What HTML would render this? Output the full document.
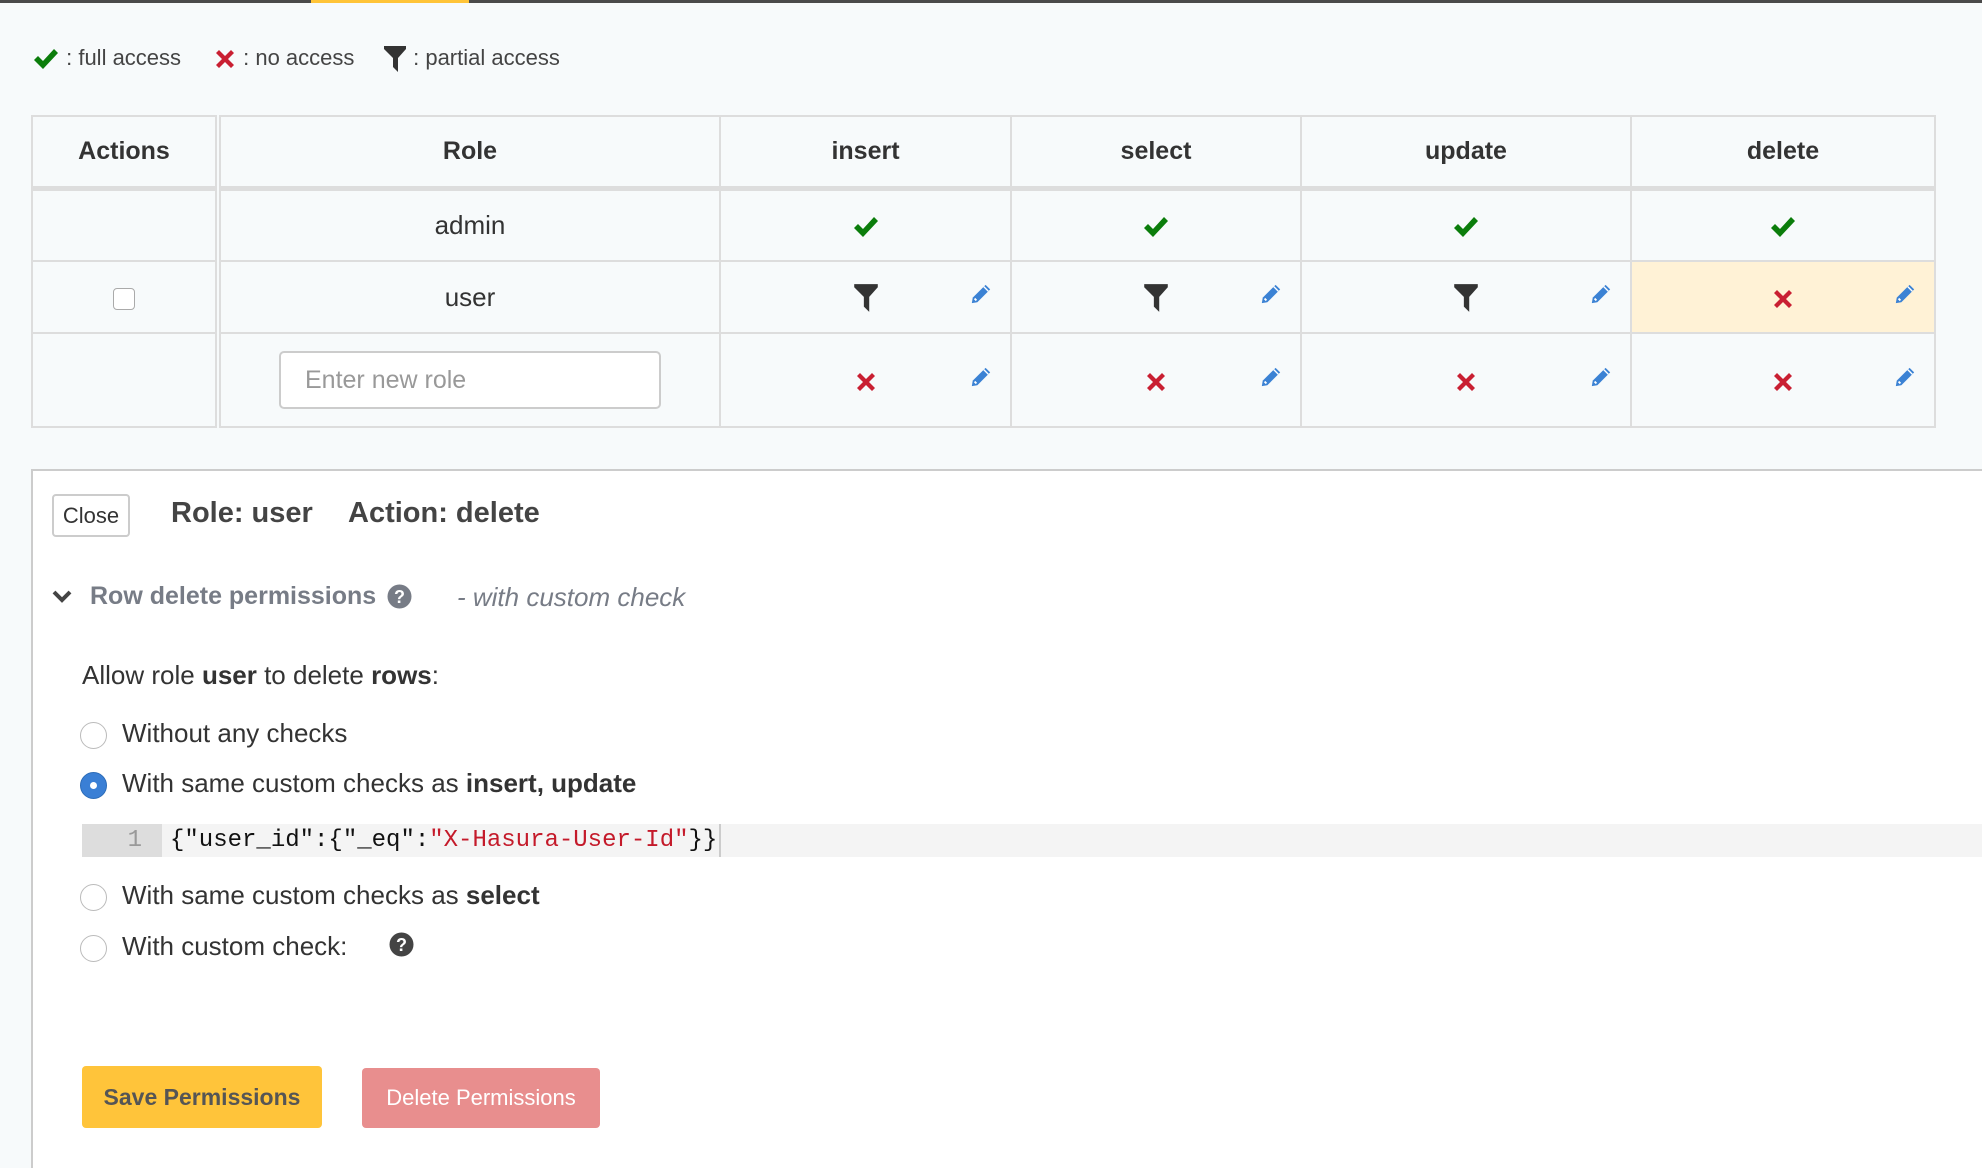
<!DOCTYPE html>
<html><head><meta charset="utf-8"><style>
*{box-sizing:border-box;margin:0;padding:0}
html,body{width:1982px;height:1168px;overflow:hidden}
body{background:#f7fafb;font-family:"Liberation Sans",sans-serif;color:#333;position:relative}
.a{position:absolute}
.bar{left:0;top:0;width:1982px;height:3px;background:#4a4a4a}
.bar i{position:absolute;left:311px;width:158px;height:3px;background:#ffc438}
.leg{top:44px;font-size:22px;color:#444;height:28px;line-height:28px}
table{position:absolute;left:31px;top:115px;border-collapse:collapse;font-size:26px}
td,th{border:2px solid #ddd;text-align:center;position:relative}
th{height:72px;font-weight:bold;font-size:25px;color:#333;border-bottom:5px solid #ddd}
.p{position:absolute;right:18px;top:50%;margin-top:-14px}
.c{display:inline-block;vertical-align:middle}
.panel{left:31px;top:469px;width:1951px;height:699px;background:#fff;border:2px solid #ccc;border-right:none;border-bottom:none}
.rad{width:27px;height:27px;border-radius:50%;border:1px solid #bbb;background:#fff;left:80px}
.lbl{left:122px;font-size:26px;color:#333;height:32px;line-height:32px}
</style></head><body>
<svg width="0" height="0" style="position:absolute">
<defs>
<symbol id="chk" viewBox="0 0 28 24"><path d="M2 13 L6 9 L11 14 L22 2 L26 6 L11 22 Z" fill="#0b7d0b"/></symbol>
<symbol id="x" viewBox="0 0 24 24"><path d="M3 6 L6 3 L12 9 L18 3 L21 6 L15 12 L21 18 L18 21 L12 15 L6 21 L3 18 L9 12 Z" fill="#c91f32"/></symbol>
<symbol id="fun" viewBox="0 0 24 28"><path d="M1 1 H23 V4 L15 13 V27 L10 22 V13 L1 4 Z" fill="#333"/></symbol>
<symbol id="pen" viewBox="0 0 24 24"><path d="M17 2 L22 7 L8 21 L2 22 L3 16 Z" fill="#3b82d4"/><path d="M15 4 L20 9" stroke="#fff" stroke-width="1.5"/><path d="M5 17 L7 19" stroke="#fff" stroke-width="2"/></symbol>
</defs></svg>
<div class="a bar"><i></i></div>
<div class="a leg" style="left:32px"><svg class="c" width="28" height="24"><use href="#chk"/></svg> : full access</div>
<div class="a leg" style="left:213px"><svg class="c" width="24" height="24"><use href="#x"/></svg> : no access</div>
<div class="a leg" style="left:383px"><svg class="c" width="24" height="28"><use href="#fun"/></svg> : partial access</div>

<table>
<tr><th style="width:186px;border-right:6px double #ddd">Actions</th><th style="width:502px">Role</th><th style="width:291px">insert</th><th style="width:290px">select</th><th style="width:330px">update</th><th style="width:304px">delete</th></tr>
<tr style="height:73px"><td style="border-right:6px double #ddd"></td><td>admin</td>
<td><svg class="c" width="28" height="24"><use href="#chk"/></svg></td>
<td><svg class="c" width="28" height="24"><use href="#chk"/></svg></td>
<td><svg class="c" width="28" height="24"><use href="#chk"/></svg></td>
<td><svg class="c" width="28" height="24"><use href="#chk"/></svg></td></tr>
<tr style="height:72px"><td style="border-right:6px double #ddd"><span class="c" style="width:22px;height:22px;border:1px solid #aaa;border-radius:4px;background:#fff"></span></td><td>user</td>
<td><svg class="c" width="26" height="30"><use href="#fun"/></svg><svg class="p" width="22" height="22"><use href="#pen"/></svg></td>
<td><svg class="c" width="26" height="30"><use href="#fun"/></svg><svg class="p" width="22" height="22"><use href="#pen"/></svg></td>
<td><svg class="c" width="26" height="30"><use href="#fun"/></svg><svg class="p" width="22" height="22"><use href="#pen"/></svg></td>
<td style="background:#fff2d6"><svg class="c" width="24" height="24"><use href="#x"/></svg><svg class="p" width="22" height="22"><use href="#pen"/></svg></td></tr>
<tr style="height:94px"><td style="border-right:6px double #ddd"></td><td><div style="margin:0 auto;width:382px;height:58px;border:2px solid #ccc;border-radius:5px;background:#fff;text-align:left;padding-left:24px;line-height:54px;color:#999;font-size:25px">Enter new role</div></td>
<td><svg class="c" width="24" height="24"><use href="#x"/></svg><svg class="p" width="22" height="22"><use href="#pen"/></svg></td>
<td><svg class="c" width="24" height="24"><use href="#x"/></svg><svg class="p" width="22" height="22"><use href="#pen"/></svg></td>
<td><svg class="c" width="24" height="24"><use href="#x"/></svg><svg class="p" width="22" height="22"><use href="#pen"/></svg></td>
<td><svg class="c" width="24" height="24"><use href="#x"/></svg><svg class="p" width="22" height="22"><use href="#pen"/></svg></td></tr>
</table>

<div class="a panel"></div>
<div class="a" style="left:52px;top:494px;width:78px;height:43px;border:2px solid #ccc;border-radius:4px;background:#fff;font-size:22px;line-height:39px;text-align:center;color:#333">Close</div>
<div class="a" style="left:171px;top:497px;font-size:29px;font-weight:bold;color:#444">Role: user</div>
<div class="a" style="left:348px;top:497px;font-size:29px;font-weight:bold;color:#444">Action: delete</div>
<svg class="a" style="left:52px;top:589px" width="20" height="16"><path d="M2 3 L10 11 L18 3" stroke="#444" stroke-width="4" fill="none"/></svg>
<div class="a" style="left:90px;top:582px;font-size:25px;font-weight:bold;color:#777c86">Row delete permissions</div>
<svg class="a" style="left:387px;top:584px" width="25" height="25"><circle cx="12.5" cy="12.5" r="12" fill="#777c86"/><text x="12.5" y="19" font-size="18" font-weight="bold" fill="#fff" text-anchor="middle" font-family="Liberation Sans">?</text></svg>
<div class="a" style="left:457px;top:582px;font-size:26px;font-style:italic;color:#777c86">- with custom check</div>
<div class="a" style="left:82px;top:660px;font-size:26px;color:#333">Allow role <b>user</b> to delete <b>rows</b>:</div>
<div class="a rad" style="top:722px"></div><div class="a lbl" style="top:717px">Without any checks</div>
<div class="a rad" style="top:772px;background:#3a7fd5;border-color:#2c6cb8"><i style="position:absolute;left:9px;top:9px;width:7px;height:7px;border-radius:50%;background:#fff"></i></div><div class="a lbl" style="top:767px">With same custom checks as <b>insert, update</b></div>
<div class="a" style="left:82px;top:824px;width:1900px;height:33px;background:#f4f4f4"></div>
<div class="a" style="left:82px;top:824px;width:80px;height:33px;background:#ddd;color:#999;font-family:'Liberation Mono',monospace;font-size:24px;line-height:33px;text-align:right;padding-right:20px">1</div>
<div class="a" style="left:170px;top:824px;height:33px;line-height:33px;font-family:'Liberation Mono',monospace;font-size:24px;color:#111;border-right:2px solid #ccc;padding-right:2px">{"user_id":{"_eq":<span style="color:#c41a2a">"X-Hasura-User-Id"</span>}}</div>
<div class="a rad" style="top:884px"></div><div class="a lbl" style="top:879px">With same custom checks as <b>select</b></div>
<div class="a rad" style="top:935px"></div><div class="a lbl" style="top:930px">With custom check:</div>
<svg class="a" style="left:389px;top:932px" width="25" height="25"><circle cx="12.5" cy="12.5" r="12" fill="#444"/><text x="12.5" y="19" font-size="18" font-weight="bold" fill="#fff" text-anchor="middle" font-family="Liberation Sans">?</text></svg>
<div class="a" style="left:82px;top:1066px;width:240px;height:62px;background:#ffc43a;border-radius:4px;font-size:23px;font-weight:bold;color:#555;line-height:62px;text-align:center">Save Permissions</div>
<div class="a" style="left:362px;top:1068px;width:238px;height:60px;background:#e88e8e;border-radius:4px;font-size:22px;color:#fff;line-height:60px;text-align:center">Delete Permissions</div>
</body></html>
